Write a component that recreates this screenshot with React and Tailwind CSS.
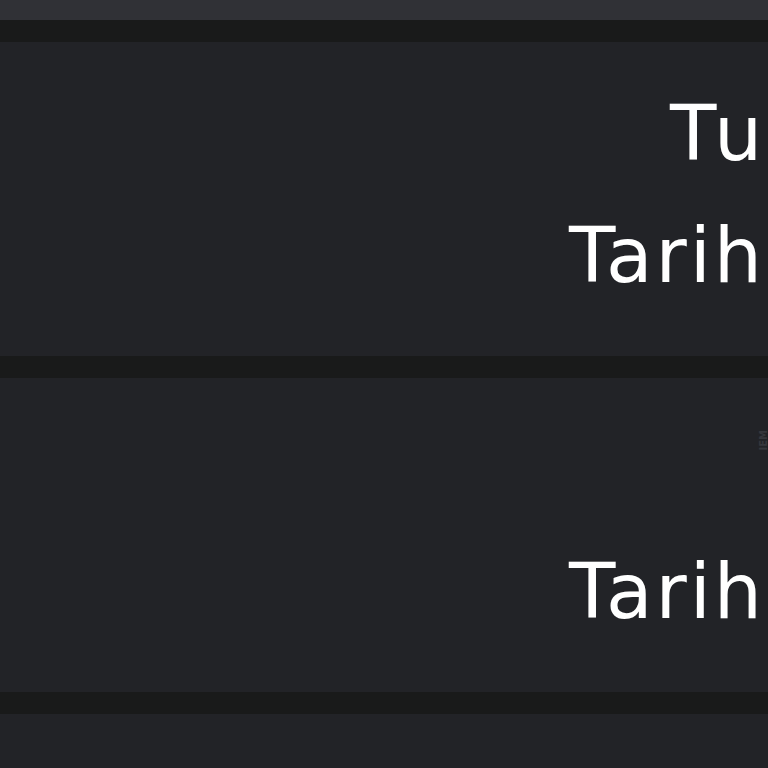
export default function App() {
  return (
    <div className="h-[768px] w-[768px] overflow-hidden bg-[#191a1a] flex flex-col gap-[22px] font-['DejaVu_Sans',sans-serif] text-white">
      <div className="h-[20px] shrink-0 bg-[#303136]" />

      {/* first card */}
      <div className="h-[314px] shrink-0 bg-[#222327] pt-[31px] overflow-hidden">
        <div className="h-[122px] leading-[122px] text-[76px] tracking-[9px] whitespace-nowrap pl-[670px]">
          Tu
        </div>
        <div className="h-[122px] leading-[122px] text-[76px] tracking-[3px] whitespace-nowrap text-right pr-[3px]">
          Tarih
        </div>
      </div>

      {/* second card */}
      <div className="h-[314px] shrink-0 bg-[#222327] pt-[31px] overflow-hidden">
        <div className="h-[122px] flex justify-end items-start pt-[21px]">
          <span className="[writing-mode:vertical-rl] rotate-180 text-[10px] leading-none text-[#36373c] font-bold mr-[-1px]">
            IEM
          </span>
        </div>
        <div className="h-[122px] leading-[122px] text-[76px] tracking-[3px] whitespace-nowrap text-right pr-[3px]">
          Tarih
        </div>
      </div>

      <div className="flex-1 bg-[#222327]" />
    </div>
  );
}
